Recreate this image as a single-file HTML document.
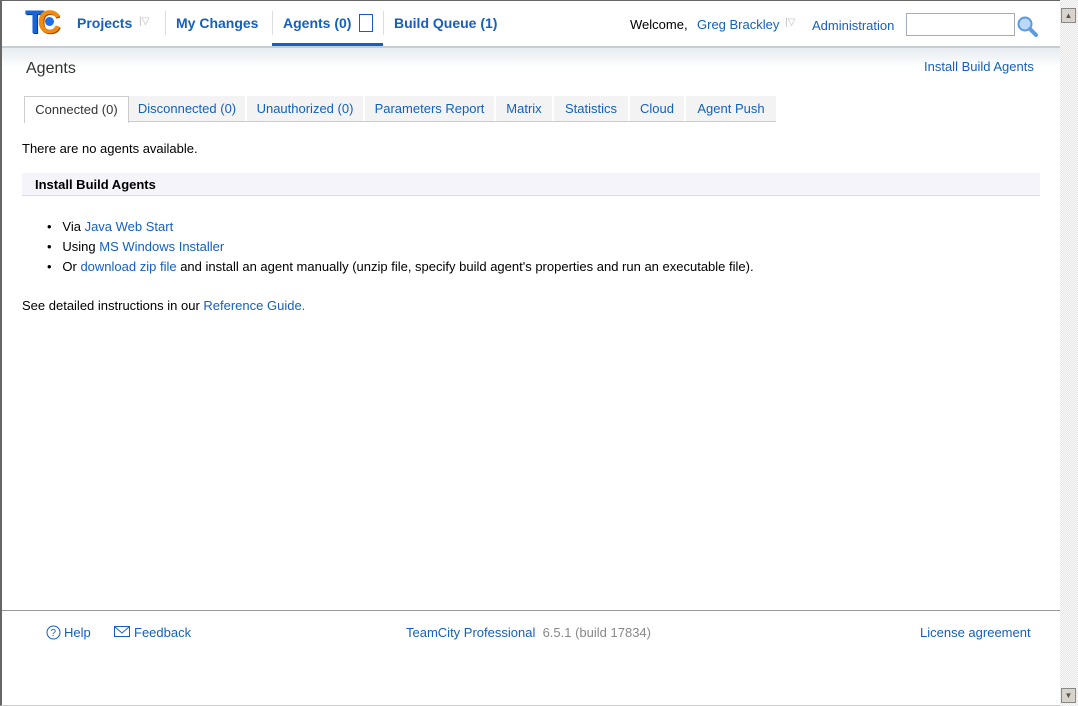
<!DOCTYPE html>
<html><head><meta charset="utf-8"><style>
body{margin:0;width:1078px;height:706px;overflow:hidden;font-family:"Liberation Sans",Arial,sans-serif;font-size:13px;color:#000;background:#fff;position:relative}
a{color:#1560bd;text-decoration:none}
.abs{position:absolute;white-space:nowrap}
.win{position:absolute;left:0;top:0;width:1058px;height:704px;border-left:2px solid #666;border-top:1px solid #666;border-bottom:1px solid #ccc}
.sb{position:absolute;left:1060px;top:0;width:18px;height:706px;background:repeating-conic-gradient(#e6e6e6 0 25%,#fafafa 0 50%) 0 0/2px 2px}
.btn{position:absolute;left:1061px;width:15px;height:15px;background:#d8d4cc;border:1px solid #888;box-sizing:border-box;font-size:8px;color:#555;text-align:center;line-height:13px}
.nav{font-weight:bold;font-size:14px;color:#1560bd;top:15px}
.sep{position:absolute;top:11px;width:1px;height:24px;background:#ddd}
.tab{position:absolute;top:96px;height:25px;background:#f3f3f3;color:#1560bd;font-size:13px;line-height:25px;text-align:center}
</style></head><body>
<div class="win"></div>
<div class="sb"></div>
<div class="btn" style="top:8px">▲</div>
<div class="btn" style="top:688px">▼</div>

<div class="abs" style="left:25px;top:6px;font:bold 32px/32px 'Liberation Sans',sans-serif;color:#1565d8;letter-spacing:-7px;text-shadow:1px 1px 0 #0a3a8a">T<span style="color:#f08a10;text-shadow:1px 1px 0 #a04a00">C</span></div>
<div class="abs" style="left:45px;top:17px;width:9px;height:9px;border-radius:50%;background:#1c6ee8"></div>

<div class="abs nav" style="left:77px">Projects</div>
<div class="abs" style="left:139px;top:16px;color:#bbb;font-size:10px">|▽</div>
<div class="sep" style="left:165px"></div>
<div class="abs nav" style="left:176px">My Changes</div>
<div class="sep" style="left:272px"></div>
<div class="abs nav" style="left:283px">Agents (0)</div>
<div class="abs" style="left:359px;top:14px;width:12px;height:16px;border:1px solid #1560bd"></div>
<div class="sep" style="left:383px"></div>
<div class="abs nav" style="left:394px">Build Queue (1)</div>
<div class="abs" style="left:272px;top:43px;width:111px;height:4px;background:#1560bd"></div>

<div class="abs" style="left:630px;top:17px;font-size:13px">Welcome,</div>
<div class="abs" style="left:697px;top:17px;font-size:13px"><a>Greg Brackley</a></div>
<div class="abs" style="left:785px;top:17px;font-size:10px;color:#bbb">|▽</div>
<div class="abs" style="left:812px;top:18px;font-size:13px"><a>Administration</a></div>
<div class="abs" style="left:906px;top:13px;width:107px;height:21px;border:1px solid #a5acc0;background:#fff"></div>
<svg class="abs" style="left:1017px;top:16px" width="22" height="22" viewBox="0 0 22 22"><circle cx="8" cy="8" r="6.5" fill="#bcd8f8" stroke="#5a9ae0" stroke-width="2"/><path d="M13 13l6 6" stroke="#5a9ae0" stroke-width="4" stroke-linecap="round"/></svg>

<div class="abs" style="left:2px;top:46px;width:1058px;height:2px;background:#c8cdd4"></div>
<div class="abs" style="left:2px;top:48px;width:1058px;height:20px;background:linear-gradient(#e6ebf0,#fff)"></div>
<div class="abs" style="left:26px;top:60px;font-size:16px;color:#333">Agents</div>
<div class="abs" style="left:924px;top:59px;font-size:13px"><a>Install Build Agents</a></div>

<div class="abs" style="left:24px;top:121px;width:752px;height:1px;background:#ccc"></div>
<div class="tab" style="left:24px;width:103px;background:#fff;border:1px solid #ccc;border-bottom:none;color:#333;height:26px">Connected (0)</div>
<div class="tab" style="left:129px;width:116px">Disconnected (0)</div>
<div class="tab" style="left:247px;width:116px">Unauthorized (0)</div>
<div class="tab" style="left:365px;width:129px">Parameters Report</div>
<div class="tab" style="left:496px;width:56px">Matrix</div>
<div class="tab" style="left:554px;width:74px">Statistics</div>
<div class="tab" style="left:630px;width:54px">Cloud</div>
<div class="tab" style="left:686px;width:90px">Agent Push</div>

<div class="abs" style="left:22px;top:141px">There are no agents available.</div>
<div class="abs" style="left:22px;top:173px;width:1018px;height:22px;background:#f4f4fa;border-bottom:1px solid #dcdce6"></div>
<div class="abs" style="left:35px;top:177px;font-weight:bold">Install Build Agents</div>
<div class="abs" style="left:47px;top:219px">•&nbsp;&nbsp; Via <a>Java Web Start</a></div>
<div class="abs" style="left:47px;top:239px">•&nbsp;&nbsp; Using <a>MS Windows Installer</a></div>
<div class="abs" style="left:47px;top:259px">•&nbsp;&nbsp; Or <a>download zip file</a> and install an agent manually (unzip file, specify build agent's properties and run an executable file).</div>
<div class="abs" style="left:22px;top:298px">See detailed instructions in our <a>Reference Guide.</a></div>

<div class="abs" style="left:2px;top:610px;width:1058px;height:1px;background:#999"></div>
<svg class="abs" style="left:46px;top:625px" width="16" height="16"><circle cx="7.5" cy="7.5" r="6.5" fill="#fff" stroke="#1560bd"/><text x="4.5" y="11" font-size="10" fill="#1560bd" font-family="Liberation Sans">?</text></svg>
<div class="abs" style="left:64px;top:625px"><a>Help</a></div>
<svg class="abs" style="left:114px;top:626px" width="17" height="12"><rect x="0.5" y="0.5" width="15" height="10" fill="#fff" stroke="#1560bd"/><path d="M1 1l7 6 7-6" fill="none" stroke="#1560bd"/></svg>
<div class="abs" style="left:134px;top:625px"><a>Feedback</a></div>
<div class="abs" style="left:406px;top:625px"><a>TeamCity Professional</a> <span style="color:#888">&nbsp;6.5.1 (build 17834)</span></div>
<div class="abs" style="left:920px;top:625px"><a>License agreement</a></div>
</body></html>
